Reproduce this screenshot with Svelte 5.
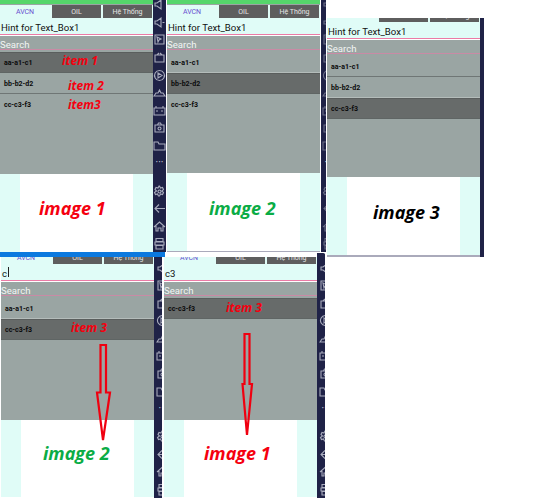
<script>
  const icons = [
    'M2 5h2l4-3v9L4 8H2z',
    'M2 5h2l4-3v9L4 8H2zM9.500 6.500h2',
    'M2 2h9v9H2zM4 4l4 2-2 1-1 2z',
    'M2 4h9v7H2zM4 4l2-2M9 4L7 2',
    'M6.500 1.500a5 5 0 1 0 .01 0zM5 4l4 2.500L5 9z',
    'M1 10l2-3h2l1.500-3L8 7h2l2 3z',
    'M1 4h11v7H1zM3 2v2M10 2v2M3 7h2M8 7h2',
    'M2 4h9v7H2zM4.500 4l1-2h2l1 2M6.500 6a1.500 1.500 0 1 0 .01 0z',
    'M1 3h4l1 2h6v6H1z',
    null,
    'M6.500 1l1 2 2-.5 1 2-1.500 1.500 1.500 1.500-1 2-2-.5-1 2h-1l-1-2-2 .5-1-2L3.500 6 2 4.500l1-2 2 .5 1-2zM6.500 5a1.500 1.500 0 1 0 .01 0z',
    'M12 6.500H2M6 2.500l-4 4 4 4',
    'M1 7l5.500-5L12 7M3 6v5h2V8h3v3h2V6',
    'M3 1.500h7v3H3zM2 5h9v3H2zM3 8.500h7V12H3z'
  ];
  const bars = [
    { cls: 'bar s1', list: icons },
    { cls: 'bar s2', list: icons },
    { cls: 'bar s3', list: [] },
    { cls: 'bar s4', list: icons },
    { cls: 'bar s5', list: icons }
  ];
  const windows = [
    { cls: 'win w1', value: 'Hint for Text_Box1', rows: ['aa-a1-c1', 'bb-b2-d2', 'cc-c3-f3'], sel: 0, tabH: 13, green: true },
    { cls: 'win w2', value: 'Hint for Text_Box1', rows: ['aa-a1-c1', 'bb-b2-d2', 'cc-c3-f3'], sel: 1, tabH: 13, green: true },
    { cls: 'win w3', value: 'Hint for Text_Box1', rows: ['aa-a1-c1', 'bb-b2-d2', 'cc-c3-f3'], sel: 2, tabH: 4 },
    { cls: 'win w4', value: 'c', caret: true, rows: ['aa-a1-c1', 'cc-c3-f3'], sel: 1, tabH: 7 },
    { cls: 'win w5', value: 'c3', rows: ['cc-c3-f3'], sel: 0, tabH: 7 }
  ];
  const notes = [
    { t: 'item 1', x: 62, y: 54, s: 12, c: 'red' },
    { t: 'item 2', x: 68, y: 79, s: 12, c: 'red' },
    { t: 'item3', x: 68, y: 98, s: 12, c: 'red' },
    { t: 'item 3', x: 71, y: 321, s: 12, c: 'red' },
    { t: 'item 3', x: 226, y: 301, s: 12, c: 'red' },
    { t: 'image 1', x: 39, y: 198, s: 18, c: 'red' },
    { t: 'image 2', x: 209, y: 198, s: 18, c: 'green' },
    { t: 'image 3', x: 373, y: 202, s: 18, c: 'black' },
    { t: 'image 2', x: 43, y: 443, s: 18, c: 'green' },
    { t: 'image 1', x: 204, y: 443, s: 18, c: 'red' }
  ];
</script>

<div class="page">
  {#each bars as b}
    <div class={b.cls}>
      {#each b.list as d}
        <div class="slot">
          {#if d}
            <svg viewBox="0 0 13 13" width="13" height="13"><path {d} /></svg>
          {:else}
            <span class="dots">···</span>
          {/if}
        </div>
      {/each}
    </div>
  {/each}

  {#each windows as w}
    <div class={w.cls}>
      {#if w.green}<div class="top"></div>{/if}
      <div class="tabs" style="height:{w.tabH}px">
        <div class="tab active">AVCN</div>
        <div class="tab">OIL</div>
        <div class="tab">Hệ Thống</div>
      </div>
      <div class="input"><span>{w.value}</span>{#if w.caret}<i class="caret"></i>{/if}</div>
      <div class="search">Search</div>
      <div class="list">
        {#each w.rows as r, i}
          <div class="row" class:sel={i === w.sel} class:before={i === w.sel - 1}>{r}</div>
        {/each}
      </div>
      <div class="image"><div class="white"></div></div>
    </div>
  {/each}

  <div class="blue"></div>

  {#each notes as n}
    <div class="note {n.c}" style="left:{n.x}px;top:{n.y}px;font-size:{n.s}px">{n.t}</div>
  {/each}

  <svg class="arrows" viewBox="0 0 534 500" width="534" height="500">
    <path d="M100.500 345H106V392.500H110L103 440L97 392.500H100.500Z" />
    <path d="M244.500 334H249.500V384H252L247 435L242.500 384H244.500Z" />
  </svg>
</div>

<style>
  :global(body) { margin: 0; background: #fff; }
  .page { position: relative; width: 534px; height: 500px; overflow: hidden; background: #fff; font-family: Roboto, "Liberation Sans", sans-serif; }

  .bar { position: absolute; background: #1f2247; display: flex; flex-direction: column; align-items: flex-start; overflow: hidden; box-sizing: border-box; }
  .slot { height: 17.6px; flex: none; display: flex; align-items: center; justify-content: center; }
  .slot:nth-child(10) { margin-bottom: 10.400px; width: 13px; }
  .slot svg { fill: none; stroke: #a9acbd; stroke-width: 1.100; }
  .dots { color: #d5d6df; font-size: 10px; line-height: 1; }
  .s1 { left: 152px; top: 0; width: 14px; height: 252px; padding-left: 1px; }
  .s1 .slot:first-child { margin-top: -4px; }
  .s2 { left: 321px; top: 0; width: 5px; height: 252px; padding-left: 1px; }
  .s2 .slot:first-child { margin-top: -4px; }
  .s3 { left: 480px; top: 18px; width: 4px; height: 239px; }
  .s4 { left: 154px; top: 253px; width: 8px; height: 245px; padding-left: 2px; }
  .s4 .slot:first-child, .s5 .slot:first-child { margin-top: -11.400px; }
  .s5 { left: 317px; top: 253px; width: 8px; height: 245px; padding-left: 2px; }
  .s2 svg { opacity: 0.55; }

  .win { position: absolute; width: 153px; display: flex; flex-direction: column; background: #9aa5a3; overflow: hidden; }
  .w1 { left: 0; top: 0; height: 252px; }
  .w2 { left: 167px; top: 0; height: 251px; border-bottom: 1px solid #aab; }
  .w3 { left: 327px; top: 18px; height: 237px; border-bottom: 2px solid #aab; }
  .w4 { left: 1px; top: 257px; height: 240px; }
  .w5 { left: 164px; top: 257px; height: 240px; }

  .top { height: 4px; background: #55d66b; flex: none; }
  .tabs { display: grid; grid-template-columns: 50px 49px 49px; gap: 2px; align-content: end; background: #e0fcf7; flex: none; margin-top: 1px; overflow: hidden; }
  .w3 .tabs, .w4 .tabs, .w5 .tabs { margin-top: 0; }
  .tab { height: 13px; background: #5e5e5e; color: #e5e5e5; font-size: 7px; line-height: 14px; text-align: center; }
  .tab.active { background: #e0fcf7; color: #6a4fd0; }
  .input { height: 16px; flex: none; box-sizing: content-box; background: #e0fcf7; color: #111; font-size: 9.600px; border-bottom: 1px solid #ec7ba6; box-shadow: 0 1px 0 #fff; display: flex; align-items: center; padding: 0 0 0 1px; margin-bottom: 2px; }
  .input span { position: relative; top: 1.500px; }
  .caret { width: 1px; height: 10px; background: #222; margin-left: 1px; }
  .search { height: 12px; flex: none; color: #f2f5f4; font-size: 9.600px; line-height: 15px; border-bottom: 1px solid #c98aa5; }
  .list { flex: 1; display: flex; flex-direction: column; padding-top: 2px; }
  .row { height: 20px; line-height: 22px; padding-left: 4px; color: #0a0a0a; font-weight: 700; font-size: 7px; border-bottom: 1px solid #6f7675; }
  .row:last-child { border-bottom-color: transparent; }
  .row.before { border-bottom-color: #b4bcba; }
  .row.sel { background: #676b6a; box-shadow: inset 0 1px 0 #5a5e5d; border-bottom-color: #5f6564; }
  .image { height: 78px; flex: none; background: #e0fcf7; display: flex; justify-content: center; }
  .w4 .image, .w5 .image { height: 77px; }
  .white { width: 113px; background: #fff; }

  .blue { position: absolute; left: 0; top: 252px; width: 165px; height: 5px; background: #0b79df; }
  .note { position: absolute; font-family: "Open Sans", "DejaVu Sans", sans-serif; font-style: italic; font-weight: 700; line-height: 1.200; white-space: nowrap; }
  .red { color: #f5000f; }
  .green { color: #0aac45; }
  .black { color: #000; }
  .arrows { position: absolute; left: 0; top: 0; pointer-events: none; }
  .arrows path { fill: none; stroke: #f00010; stroke-width: 2.200; }
</style>
